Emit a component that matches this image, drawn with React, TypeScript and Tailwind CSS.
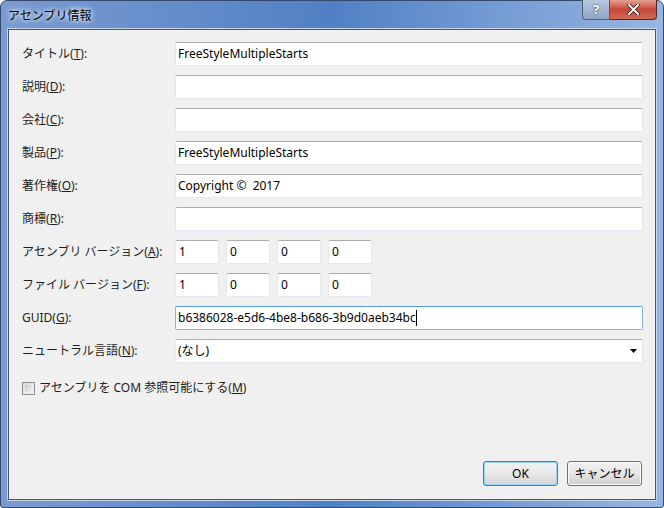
import React from 'react';

const font = { fontFamily: '"Noto Sans", "Noto Sans CJK JP", sans-serif' };

interface rowProps {
    label: React.ReactNode;
    children: React.ReactNode;
}

function Row({ label, children }: rowProps) {
    return (
        <>
            <div className="flex items-center h-[24px] text-[12px] text-[#1e1e1e] whitespace-nowrap">{label}</div>
            <div className="flex items-center h-[24px]">{children}</div>
        </>
    );
}

function TextBox({ value, focus }: { value?: string; focus?: boolean }) {
    const cls = focus
        ? 'border-[#7eb4ea] border-t-[#569de5]'
        : 'border-[#e3e9ef] border-t-[#abadb3] border-l-[#e2e3ea]';
    return (
        <div className={`w-full h-[24px] bg-white border rounded-[2px] flex items-center pl-[2px] text-[12px] text-black whitespace-pre ${cls}`}>
            {value}
            {focus && <span className="inline-block w-[1px] h-[16px] bg-black"></span>}
        </div>
    );
}

function SmallBox({ value }: { value: string }) {
    return (
        <div className="w-[44px] h-[24px] bg-white border border-[#e3e9ef] border-t-[#abadb3] rounded-[2px] flex items-center pl-[3px] text-[12px] text-black">
            {value}
        </div>
    );
}

function L({ text, k }: { text: string; k: string }) {
    return (
        <span>
            {text}(<u>{k}</u>):
        </span>
    );
}

export default function App() {
    const rows = [
        { text: 'タイトル', k: 'T', value: 'FreeStyleMultipleStarts' },
        { text: '説明', k: 'D', value: '' },
        { text: '会社', k: 'C', value: '' },
        { text: '製品', k: 'P', value: 'FreeStyleMultipleStarts' },
        { text: '著作権', k: 'O', value: 'Copyright ©  2017' },
        { text: '商標', k: 'R', value: '' },
    ];

    return (
        <div className="w-[664px] h-[508px] bg-white" style={font}>
            <div className="w-[664px] h-[508px] rounded-t-[7px] rounded-b-[3px] border border-[#34496b] bg-gradient-to-r from-[#7b9bd0] via-[#5080c4] to-[#98b6e2] flex flex-col px-[6px] pb-[6px]">
                {/* title bar */}
                <div className="flex h-[27px] relative">
                    <div className="pl-[1px] pt-[6px] text-[12px] text-black [text-shadow:0_0_6px_#fff,0_0_4px_#fff]">アセンブリ情報</div>
                    <div className="absolute right-[0px] top-[-1px] flex">
                        <div className="w-[28px] h-[20px] rounded-bl-[4px] border border-[#4d5f7d] border-t-0 bg-gradient-to-b from-[#b7c8e0] to-[#8ea6c8] flex items-center justify-center text-white text-[13px] font-bold [text-shadow:0_0_2px_#223]">?</div>
                        <div className="w-[47px] h-[20px] rounded-br-[4px] border border-[#5a2220] border-t-0 border-l-0 bg-gradient-to-b from-[#e3a193] via-[#c9473a] to-[#d06a52] flex items-center justify-center">
                            <svg width="13" height="11" viewBox="0 0 13 11">
                                <path d="M2 1 L11 10 M11 1 L2 10" stroke="#3a1010" strokeWidth="3.6" strokeLinecap="square" />
                                <path d="M2 1 L11 10 M11 1 L2 10" stroke="#fff" strokeWidth="2" strokeLinecap="square" />
                            </svg>
                        </div>
                    </div>
                </div>

                {/* client area */}
                <div className="flex-1 border border-[#c9d6ea] rounded-[1px]">
                    <div className="h-full border border-[#3e577f] bg-[#f0f0f0] flex flex-col pl-[13px] pr-[12px] pt-[12px]">
                        <div className="grid grid-cols-[153px_1fr] gap-y-[9px]">
                            {rows.map((r, index) => (
                                <Row key={index} label={<L text={r.text} k={r.k} />}>
                                    <TextBox value={r.value} />
                                </Row>
                            ))}
                            <Row label={<L text="アセンブリ バージョン" k="A" />}>
                                <div className="flex gap-[7px]">
                                    {['1', '0', '0', '0'].map((v, i) => <SmallBox key={i} value={v} />)}
                                </div>
                            </Row>
                            <Row label={<L text="ファイル バージョン" k="F" />}>
                                <div className="flex gap-[7px]">
                                    {['1', '0', '0', '0'].map((v, i) => <SmallBox key={i} value={v} />)}
                                </div>
                            </Row>
                            <Row label={<L text="GUID" k="G" />}>
                                <TextBox value="b6386028-e5d6-4be8-b686-3b9d0aeb34bc" focus />
                            </Row>
                            <Row label={<L text="ニュートラル言語" k="N" />}>
                                <div className="w-full h-[24px] bg-white border border-[#e3e9ef] border-t-[#abadb3] rounded-[2px] flex items-center justify-between pl-[2px] pr-[5px] text-[12px] text-black">
                                    <span>(なし)</span>
                                    <svg width="7" height="4" viewBox="0 0 7 4"><path d="M0 0 H7 L3.5 4 Z" fill="#000" /></svg>
                                </div>
                            </Row>
                        </div>

                        <div className="flex items-center gap-[4px] mt-[16px] text-[12px] text-[#1e1e1e]">
                            <div className="w-[13px] h-[13px] border border-[#8f8f8f] bg-gradient-to-br from-[#dcdcdc] to-[#f6f6f6] p-[2px]">
                                <div className="w-full h-full bg-gradient-to-br from-[#cbcbcb] to-[#efefef]"></div>
                            </div>
                            <span>アセンブリを COM 参照可能にする(<u>M</u>)</span>
                        </div>

                        <div className="flex-1"></div>
                        <div className="flex justify-end gap-[9px] mb-[13px] pr-[1px]">
                            <button className="w-[75px] h-[25px] rounded-[3px] border border-[#3c7fb1] bg-gradient-to-b from-[#f2f2f2] via-[#e8e8e8] to-[#d6d6d6] text-[12px] text-black shadow-[inset_0_0_0_1px_#9fd6f5]">OK</button>
                            <button className="w-[75px] h-[25px] rounded-[3px] border border-[#707070] bg-gradient-to-b from-[#f2f2f2] via-[#e6e6e6] to-[#d0d0d0] text-[12px] text-black shadow-[inset_0_0_0_1px_#fcfcfc]">キャンセル</button>
                        </div>
                    </div>
                </div>
            </div>
        </div>
    );
}
